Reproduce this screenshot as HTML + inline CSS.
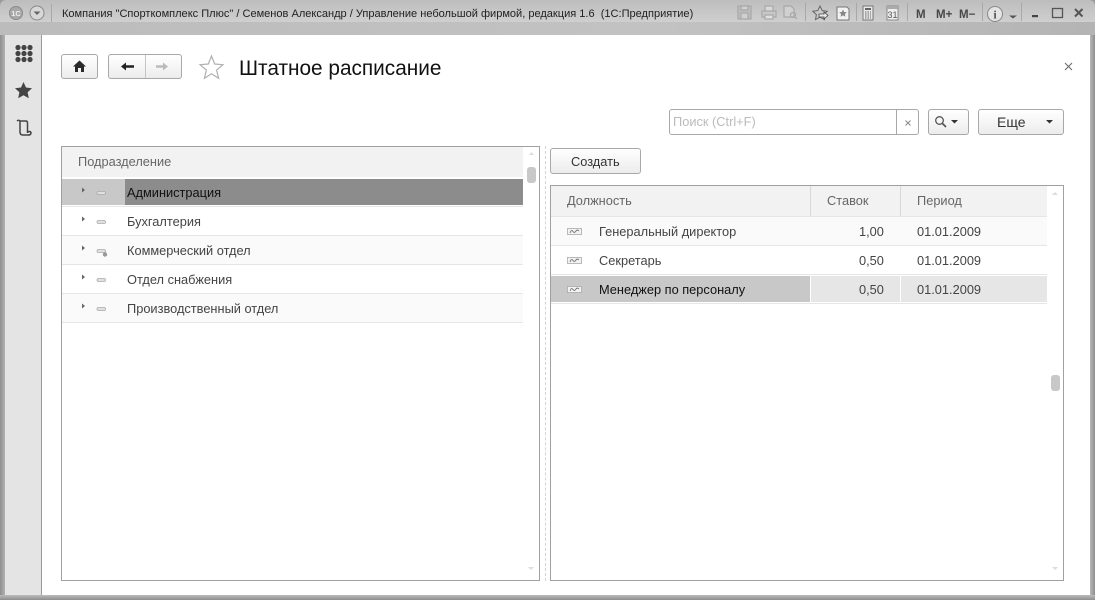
<!DOCTYPE html>
<html><head><meta charset="utf-8">
<style>
html,body{margin:0;padding:0;background:#fff}
#w{position:relative;width:1095px;height:600px;overflow:hidden;background:#9a9a9a;font-family:"Liberation Sans",sans-serif;color:#333}
#w div,#w span.a,#w svg{position:absolute}
.t{font-size:12.8px;line-height:16px;white-space:nowrap;color:#444}
.btn{box-sizing:border-box;border:1px solid #a8a8a8;border-radius:3px;background:linear-gradient(#fff,#ececec)}
.rl{height:1px;background:#e6e6e6}
</style></head><body>
<div id="w">
<!-- titlebar -->
<div style="left:0;top:0;width:1095px;height:22px;background:linear-gradient(#bdbdbd,#cfcfcf);border-radius:6px 6px 0 0"></div>
<div style="left:0;top:22px;width:1095px;height:13px;background:linear-gradient(90deg,#bcbcbc,#c2c2c2 60%,#b4b4b4)"></div>
<div style="left:0;top:35px;width:5px;height:565px;background:linear-gradient(90deg,#8e8e8e,#b2b2b2)"></div>
<div style="left:1090px;top:35px;width:5px;height:565px;background:linear-gradient(90deg,#b8b8b8,#8e8e8e)"></div>
<div style="left:0;top:595px;width:1095px;height:5px;background:linear-gradient(#bcbcbc,#8e8e8e)"></div>

<svg style="left:7px;top:4px" width="44" height="18" viewBox="0 0 44 18">
<circle cx="9" cy="9" r="6.5" fill="#a8a8a8" stroke="#8a8a8a"/>
<text x="9" y="12" font-size="7.5" font-weight="bold" text-anchor="middle" fill="#eee" font-family="Liberation Sans">1C</text>
<circle cx="30" cy="9" r="7" fill="#d8d8d8" stroke="#888"/>
<path d="M26.5 7.5h7l-3.500 3.500z" fill="#666"/>
</svg>
<div style="left:51px;top:4px;width:1px;height:18px;background:#a8a8a8"></div>
<div class="t" style="left:62px;top:6px;font-size:11.04px;color:#222">Компания "Спорткомплекс Плюс" / Семенов Александр / Управление небольшой фирмой, редакция 1.6 &nbsp;(1С:Предприятие)</div>

<svg style="left:730px;top:0" width="365" height="24" viewBox="0 0 365 24">
<g fill="none" stroke="#a8a8a8" stroke-width="1.2">
<rect x="8" y="6" width="13" height="13" fill="#bdbdbd"/><rect x="11" y="6" width="7" height="4" fill="#d0d0d0"/><rect x="11" y="13" width="7" height="6" fill="#d0d0d0"/>
<rect x="32" y="11" width="14" height="6" fill="#c8c8c8"/><rect x="35" y="6" width="8" height="5" fill="#d8d8d8"/><rect x="35" y="15" width="8" height="4" fill="#e0e0e0"/>
<path d="M54 6h7l3 3v8h-10z" fill="#d0d0d0"/><circle cx="63" cy="15" r="2.5"/><path d="M65 17l2 2"/>
</g>
<rect x="75" y="3" width="1" height="18" fill="#a8a8a8"/>
<path d="M90 6l2.2 4.6 5 .6-3.6 3.4.9 5-4.500-2.400-4.500 2.400.9-5-3.600-3.400 5-.6z" fill="#ccc" stroke="#666"/>
<path d="M89 14h5v-2l4 3.500-4 3.500v-2h-5z" fill="#e8e8e8" stroke="#444" stroke-width=".8"/>
<path d="M107 7h10l2 2v11h-12z" fill="#f2f2f2" stroke="#777"/>
<path d="M113 9.500l1.200 2.500 2.600.3-1.900 1.800.5 2.600-2.400-1.300-2.400 1.300.5-2.600-1.900-1.800 2.600-.3z" fill="#888"/>
<rect x="126" y="3" width="1" height="18" fill="#a8a8a8"/>
<rect x="133" y="6" width="10" height="14" fill="#e8e8e8" stroke="#777"/>
<rect x="135" y="8" width="6" height="2" fill="#666"/>
<path d="M135 12h6M135 14h6M135 16h6M135 18h6" stroke="#666" stroke-dasharray="1.500 1"/>
<rect x="157" y="6" width="11" height="14" fill="#eee" stroke="#888"/>
<rect x="157" y="6" width="11" height="3" fill="#aaa"/>
<text x="162.500" y="18" font-size="9" text-anchor="middle" fill="#555" font-family="Liberation Sans">31</text>
<rect x="177" y="3" width="1" height="18" fill="#a8a8a8"/>
<g font-family="Liberation Sans" font-weight="bold" font-size="11.500" fill="#484848">
<text x="186" y="18">M</text><text x="206" y="18">M+</text><text x="229" y="18">M−</text></g>
<rect x="252" y="3" width="1" height="18" fill="#a8a8a8"/>
<circle cx="265" cy="14" r="7.500" fill="#e4e4e4" stroke="#888"/>
<text x="265" y="18.500" font-size="12" font-weight="bold" text-anchor="middle" fill="#555" font-family="Liberation Serif">i</text>
<path d="M279 15.500h8l-4 3z" fill="#555"/>
<rect x="291" y="3" width="1" height="18" fill="#a8a8a8"/>
<rect x="302" y="15" width="6" height="2.200" fill="#444"/>
<rect x="322.500" y="8.500" width="10" height="9" fill="none" stroke="#555" stroke-width="1.300"/>
<path d="M345 9l7.500 7.500M352.500 9L345 16.500" stroke="#555" stroke-width="2"/>
</svg>

<!-- content -->
<div style="left:5px;top:35px;width:1085px;height:560px;background:#fff"></div>
<div style="left:5px;top:35px;width:36px;height:560px;background:#e4e4e4;border-right:1px solid #999"></div>
<svg style="left:13px;top:43px" width="22" height="100" viewBox="0 0 22 100">
<g fill="#444"><circle cx="5" cy="4.500" r="2.600"/><circle cx="11" cy="4.500" r="2.600"/><circle cx="17" cy="4.500" r="2.600"/><circle cx="5" cy="10.500" r="2.600"/><circle cx="11" cy="10.500" r="2.600"/><circle cx="17" cy="10.500" r="2.600"/><circle cx="5" cy="16.500" r="2.600"/><circle cx="11" cy="16.500" r="2.600"/><circle cx="17" cy="16.500" r="2.600"/></g>
<path d="M10.500 39l2.500 5.500 6 .7-4.400 4 1.200 6-5.300-3-5.300 3 1.200-6-4.400-4 6-.7z" fill="#444"/>
<path d="M4 78c2-1.500 3-.5 3 1v10c0 2 1 3 3 3h7M7 78h6c1 0 1.500 .8 1.500 2v10M14.500 90c0-2 3.500-2 3.500 0s-2 2-3 2" fill="none" stroke="#444" stroke-width="1.500"/>
</svg>

<!-- nav -->
<div class="btn" style="left:61px;top:54px;width:37px;height:25px"></div>
<svg style="left:72px;top:60px" width="15" height="13" viewBox="0 0 15 13"><path d="M7.500 .5L14 6.500h-2V12H9V8H6v4H3V6.500H1z" fill="#2a2a2a"/></svg>
<div class="btn" style="left:108px;top:54px;width:74px;height:25px"></div>
<div style="left:145px;top:55px;width:1px;height:23px;background:#c4c4c4"></div>
<svg style="left:119px;top:60px" width="56" height="13" viewBox="0 0 56 13"><path d="M2 6.500L7 2.500v2.700h8v2.600H7v2.700z" fill="#222"/><path d="M49 6.500L44 2.500v2.700h-7v2.600h7v2.700z" fill="#bbb"/></svg>
<svg style="left:198px;top:54px" width="27" height="26" viewBox="0 0 27 26"><path d="M13.500 2l3.200 8 8.300.7-6.400 5.400 2 8.200-7.100-4.500-7.100 4.500 2-8.200L2 10.700l8.300-.7z" fill="#fff" stroke="#b0b0b0" stroke-width="1.200"/></svg>
<div style="left:239px;top:57px;font-size:20.8px;line-height:24px;color:#111;white-space:nowrap">Штатное расписание</div>
<svg style="left:1064px;top:62px" width="9" height="9" viewBox="0 0 9 9"><path d="M1 1l7 7M8 1l-7 7" stroke="#666"/></svg>

<!-- search -->
<div style="box-sizing:border-box;left:669px;top:109px;width:250px;height:26px;border:1px solid #a8a8a8;border-radius:3px;background:#fff"></div>
<div style="left:896px;top:110px;width:1px;height:24px;background:#a8a8a8"></div>
<div class="t" style="left:673px;top:114px;color:#bbb">Поиск (Ctrl+F)</div>
<svg style="left:904px;top:119px" width="8" height="8" viewBox="0 0 8 8"><path d="M1.500 1.500l5 5M6.500 1.500l-5 5" stroke="#888"/></svg>
<div class="btn" style="left:928px;top:109px;width:41px;height:26px"></div>
<svg style="left:934px;top:115px" width="26" height="14" viewBox="0 0 26 14"><circle cx="5.500" cy="5.500" r="3.800" fill="none" stroke="#555" stroke-width="1.300"/><path d="M8.500 8.500l3.500 3.500" stroke="#555" stroke-width="1.700"/><path d="M17 5h7l-3.500 3.500z" fill="#333"/></svg>
<div class="btn" style="left:978px;top:109px;width:86px;height:26px"></div>
<div class="t" style="left:997px;top:114px;font-size:14px;color:#333">Еще</div>
<svg style="left:1045px;top:119px" width="9" height="6" viewBox="0 0 9 6"><path d="M1 1h7L4.500 4.500z" fill="#333"/></svg>

<!-- left panel -->
<div style="box-sizing:border-box;left:61px;top:146px;width:479px;height:435px;border:1px solid #a0a0a0"></div>
<div style="left:62px;top:147px;width:461px;height:30px;background:#f2f2f2"></div>
<div class="t" style="left:78px;top:154px;color:#666">Подразделение</div>
<div style="left:62px;top:179px;width:63px;height:26px;background:#c8c8c8"></div>
<div style="left:125px;top:179px;width:398px;height:26px;background:#8c8c8c"></div>
<div class="rl" style="left:62px;top:206px;width:461px"></div>
<div style="left:62px;top:236px;width:461px;height:28px;background:#fafafa"></div>
<div class="rl" style="left:62px;top:235px;width:461px"></div>
<div class="rl" style="left:62px;top:264px;width:461px"></div>
<div style="left:62px;top:294px;width:461px;height:28px;background:#fafafa"></div>
<div class="rl" style="left:62px;top:293px;width:461px"></div>
<div class="rl" style="left:62px;top:322px;width:461px"></div>
<div class="t" style="left:127px;top:185px;color:#111">Администрация</div>
<div class="t" style="left:127px;top:214px">Бухгалтерия</div>
<div class="t" style="left:127px;top:243px">Коммерческий отдел</div>
<div class="t" style="left:127px;top:272px">Отдел снабжения</div>
<div class="t" style="left:127px;top:301px">Производственный отдел</div>
<svg style="left:80px;top:185px" width="30" height="130" viewBox="0 0 30 130">
<g fill="#666"><path d="M2 2.500l3 2.500-3 2.500z"/><path d="M2 31.500l3 2.500-3 2.500z"/><path d="M2 60.500l3 2.500-3 2.500z"/><path d="M2 89.500l3 2.500-3 2.500z"/><path d="M2 118.500l3 2.500-3 2.500z"/></g>
<g fill="#e0e0e0" stroke="#aaa" stroke-width=".8"><rect x="17" y="6.500" width="8.500" height="3" rx="1.500"/><rect x="17" y="35.500" width="8.500" height="3" rx="1.500"/><rect x="17" y="64.500" width="8.500" height="3" rx="1.500"/><rect x="17" y="93.500" width="8.500" height="3" rx="1.500"/><rect x="17" y="122.500" width="8.500" height="3" rx="1.500"/></g>
<circle cx="25" cy="69.500" r="2.200" fill="#999"/>
</svg>
<svg style="left:527px;top:150px" width="9" height="34" viewBox="0 0 9 34"><path d="M2 5l2.500-3L7 5z" fill="#ddd"/><rect x="0" y="17" width="9" height="16" rx="3" fill="#c8c8c8"/></svg>
<svg style="left:527px;top:566px" width="9" height="6" viewBox="0 0 9 6"><path d="M1 1h6L4 4z" fill="#ddd"/></svg>

<!-- splitter -->
<div style="left:545px;top:146px;width:0;height:435px;border-left:1px dashed #d4d4d4"></div>

<!-- right -->
<div class="btn" style="left:550px;top:148px;width:91px;height:26px"></div>
<div class="t" style="left:571px;top:154px;color:#333">Создать</div>
<div style="box-sizing:border-box;left:550px;top:185px;width:514px;height:396px;border:1px solid #a0a0a0"></div>
<div style="left:551px;top:186px;width:496px;height:30px;background:#f2f2f2"></div>
<div style="left:810px;top:186px;width:1px;height:30px;background:#d8d8d8"></div>
<div style="left:900px;top:186px;width:1px;height:30px;background:#d8d8d8"></div>
<div class="t" style="left:567px;top:193px;color:#666">Должность</div>
<div class="t" style="left:827px;top:193px;color:#666">Ставок</div>
<div class="t" style="left:917px;top:193px;color:#666">Период</div>
<div class="rl" style="left:551px;top:216px;width:496px"></div>
<div style="left:551px;top:217px;width:496px;height:28px;background:#fafafa"></div>
<div class="rl" style="left:551px;top:245px;width:496px"></div>
<div class="rl" style="left:551px;top:274px;width:496px"></div>
<div style="left:551px;top:276px;width:259px;height:26px;background:#c8c8c8"></div>
<div style="left:811px;top:276px;width:89px;height:26px;background:#e6e6e6"></div>
<div style="left:901px;top:276px;width:146px;height:26px;background:#e6e6e6"></div>
<div class="rl" style="left:551px;top:303px;width:496px"></div>
<div class="t" style="left:599px;top:224px">Генеральный директор</div>
<div class="t" style="left:599px;top:253px">Секретарь</div>
<div class="t" style="left:599px;top:282px;color:#111">Менеджер по персоналу</div>
<div class="t" style="left:859px;top:224px">1,00</div>
<div class="t" style="left:859px;top:253px">0,50</div>
<div class="t" style="left:859px;top:282px">0,50</div>
<div class="t" style="left:917px;top:224px">01.01.2009</div>
<div class="t" style="left:917px;top:253px">01.01.2009</div>
<div class="t" style="left:917px;top:282px">01.01.2009</div>
<svg style="left:567px;top:227px" width="15" height="70" viewBox="0 0 15 70">
<g fill="#f2f2f2" stroke="#aaa" stroke-width=".8"><rect x=".5" y="1.500" width="14" height="6"/><rect x=".5" y="30.500" width="14" height="6"/><rect x=".5" y="59.500" width="14" height="6"/></g>
<g fill="none" stroke="#666" stroke-width=".8"><path d="M3 6c1-3 2-3 3-1.500s2 1 3-.5 2-1 3 0"/><path d="M3 35c1-3 2-3 3-1.500s2 1 3-.5 2-1 3 0"/><path d="M3 64c1-3 2-3 3-1.500s2 1 3-.5 2-1 3 0"/></g>
</svg>
<svg style="left:1051px;top:190px" width="9" height="8" viewBox="0 0 9 8"><path d="M1 5l3-3 3 3z" fill="#ddd"/></svg>
<div style="left:1051px;top:375px;width:9px;height:16px;border-radius:3px;background:#c8c8c8"></div>
<svg style="left:1051px;top:566px" width="9" height="6" viewBox="0 0 9 6"><path d="M1 1h6L4 4z" fill="#ddd"/></svg>
</div>
</body></html>
